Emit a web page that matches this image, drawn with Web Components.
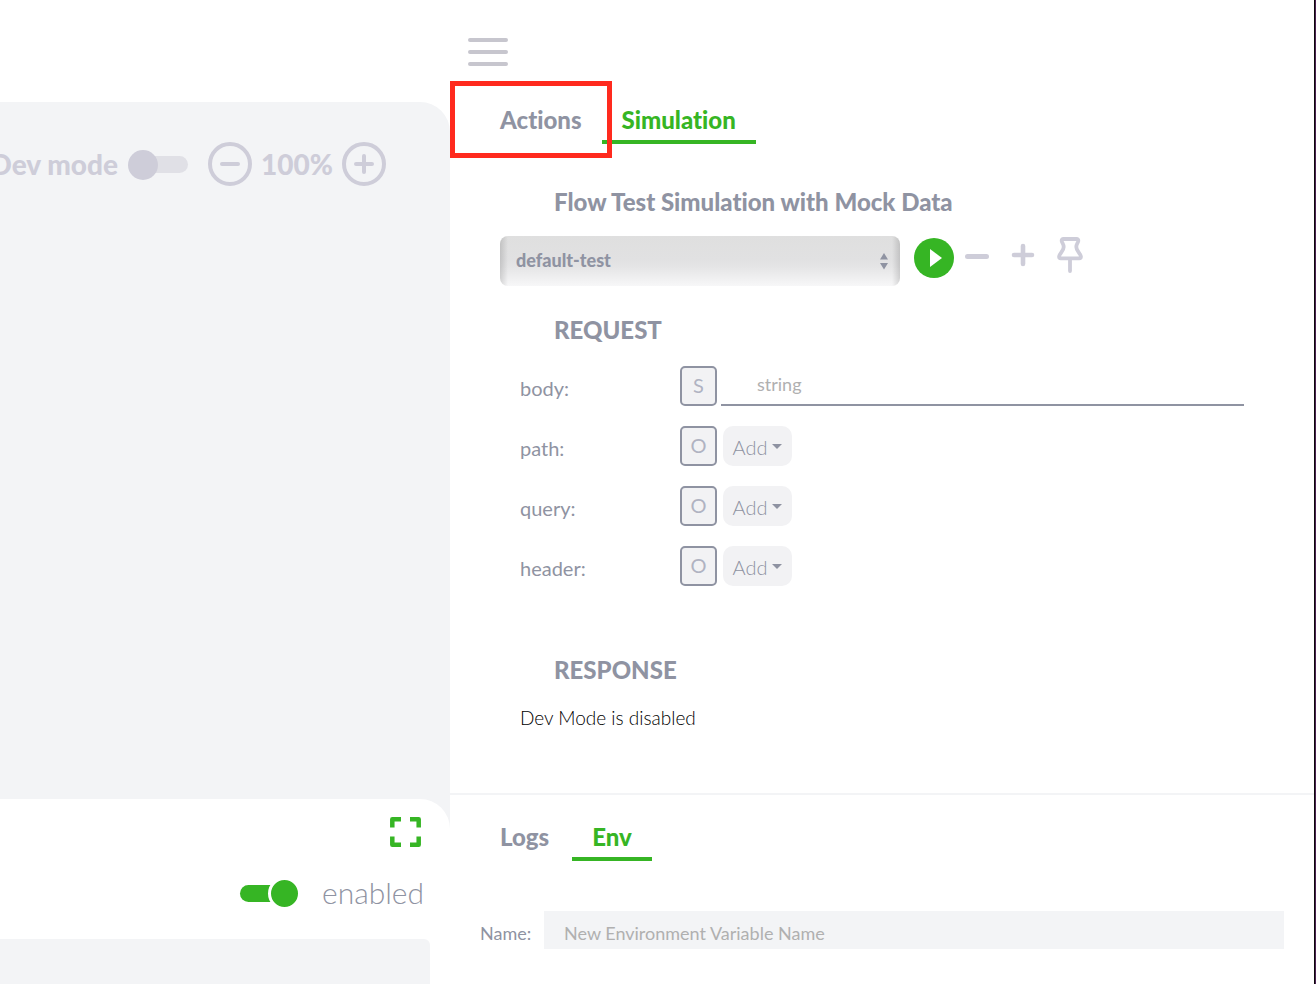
<!DOCTYPE html>
<html lang="en">
<head>
<meta charset="utf-8">
<title>Flow editor</title>
<style>
  html, body { margin: 0; }
  body {
    --ink: #8f93a2;
    --soft: #cecdd9;
    --green: #36b524;
    --wash: #f3f4f6;
    --field: #f2f2f4;
    background: #fff;
    color: var(--ink);
    font-family: Lato, "Open Sans", sans-serif;
    font-size: 20px;
    line-height: 24px;
    font-variant-ligatures: none;
  }
</style>
</head>
<body>
<flow-app></flow-app>
<script>
const base = `
  *, *::before, *::after { box-sizing: border-box; }
  button { border: 0; background: none; padding: 0; margin: 0; font: inherit; font-variant-ligatures: none; color: inherit; cursor: pointer; }
  svg { display: block; }
  h2, p { margin: 0; }
  h2 { font-size: 24px; line-height: 32px; font-weight: 900; }
`;
function define(name, css, html) {
  const template = document.createElement('template');
  customElements.define(name, class extends HTMLElement {
    constructor() {
      super();
      template.innerHTML = `<style>${base}${css}</style>${typeof html === 'function' ? html(this) : html}`;
      this.attachShadow({ mode: 'open' }).append(template.content.cloneNode(true));
    }
  });
}

define('toggle-switch', `
  :host { display: block; }
  input { appearance: none; display: block; position: relative; margin: 0; width: 60px; height: 30px; }
  input::before { content: ""; position: absolute; left: 6px; right: 0; top: 7px; height: 17px; border-radius: 9px; background: #e0e0e6; }
  input::after { content: ""; position: absolute; left: 0; top: 1px; width: 30px; height: 30px; border-radius: 50%; background: var(--soft); }
  input:checked::before { left: 0; right: 8px; background: var(--green); }
  input:checked::after { left: 28px; background: var(--green); border: 3px solid #fff; width: 33px; height: 33px; top: -1px; }
`, el => `<input type="checkbox" aria-label="${el.getAttribute('label')}" ${el.hasAttribute('checked') ? 'checked' : ''}>`);

define('zoom-button', `
  :host { display: block; }
  button { display: block; width: 44px; height: 44px; }
`, el => `<button aria-label="${el.getAttribute('kind') === 'in' ? 'Zoom in' : 'Zoom out'}">
  <svg width="44" height="44" viewBox="0 0 44 44" fill="none" stroke="#cecdd9" stroke-width="4" stroke-linecap="round">
    <circle cx="22" cy="22" r="20"/><path d="M14 22h16${el.getAttribute('kind') === 'in' ? 'M22 14v16' : ''}"/>
  </svg></button>`);

define('canvas-toolbar', `
  :host { display: flex; justify-content: flex-end; align-items: center; padding: 40px 64px 0 0; overflow: hidden; color: var(--soft); font-size: 28px; line-height: 44px; font-weight: 900; white-space: nowrap; }
  :host > * , span, output, toggle-switch, zoom-button { flex-shrink: 0; }
  toggle-switch { margin: 0 20px 0 10px; }
  output { width: 90px; text-align: center; }
`, `<span>Dev mode</span><toggle-switch label="Dev mode"></toggle-switch>
  <zoom-button kind="out"></zoom-button><output>100%</output><zoom-button kind="in"></zoom-button>`);

define('node-panel', `
  :host { display: block; background: #fff; border-radius: 0 30px 0 0; padding: 17px 20px 0 0; }
  .expand { display: block; margin: 0 8px 0 auto; width: 33px; height: 32px; }
  .state { display: flex; justify-content: flex-end; align-items: center; gap: 22px; padding-right: 6px; margin-top: 27px; height: 36px; font-size: 30px; line-height: 36px; font-weight: 300; }
  .state span { padding-bottom: 2px; }
  .body { margin-top: 28px; height: 45px; background: var(--wash); border-radius: 0 6px 0 0; }
`, `<button class="expand" aria-label="Expand">
    <svg width="33" height="32" viewBox="0 0 33 32" fill="none" stroke="#36b524" stroke-width="4.5" stroke-linejoin="round">
      <path d="M3.300 11.500V3.200h8.700M21 3.200h8.700v8.300M29.700 20.500v8.300H21M12 28.800H3.300v-8.300"/>
    </svg></button>
  <div class="state"><toggle-switch checked label="enabled"></toggle-switch><span>enabled</span></div>
  <div class="body"></div>`);

define('flow-canvas', `
  :host { display: grid; grid-template: 1fr auto / minmax(0, 1fr); margin-top: 102px; background: var(--wash); border-radius: 0 30px 0 0; min-width: 0; overflow: hidden; }
`, `<div><canvas-toolbar></canvas-toolbar></div><node-panel></node-panel>`);

define('tab-button', `
  :host { display: block; }
  button { display: block; padding: 0 20px; height: 44px; border-bottom: 4px solid transparent; font-size: 24px; line-height: 40px; font-weight: 900; }
  :host([selected]) button { color: var(--green); border-color: var(--green); }
`, el => `<button role="tab" aria-selected="${el.hasAttribute('selected')}"><slot></slot></button>`);

define('tab-bar', `
  :host { display: flex; padding-left: 30px; position: relative; }
`, `<slot></slot>`);

define('menu-button', `
  :host { display: block; padding: 37px 0 0 18px; }
  button { display: block; }
`, `<button aria-label="Menu"><svg width="40" height="30" viewBox="0 0 40 30" stroke="#c7c6ce" stroke-width="4" stroke-linecap="round"><path d="M2 3h36M2 15h36M2 27h36"/></svg></button>`);

define('test-picker', `
  :host { display: flex; align-items: flex-start; }
  .box { position: relative; flex: 0 1 400px; }
  select { appearance: none; display: block; width: 100%; height: 50px; margin: 0; border: 0; border-radius: 8px; padding: 0 32px 2px 16px; color: var(--ink); font: 900 18px/24px Lato, sans-serif; font-variant-ligatures: none;
    background: linear-gradient(90deg, #0002, #0000 8px calc(100% - 8px), #0002), linear-gradient(#dfdfdf, #e1e1e2 48%, #e4e4e5 60%, #f7f7f8); }
  .box svg { position: absolute; right: 12px; top: 17px; pointer-events: none; }
  .play { margin: 2px 0 0 14px; }
  .less { margin: 18px 0 0 11px; }
  .more { margin: 7px 0 0 22px; }
  .pin { margin: 0 0 0 21px; }
`, `<div class="box"><select aria-label="Test"><option>default-test</option></select>
    <svg width="8" height="17" viewBox="0 0 8 17" fill="#8f93a2"><path d="M4 0l4 6.500H0zM0 10h8l-4 6.500z"/></svg></div>
  <button class="play" aria-label="Run test"><svg width="40" height="40" viewBox="0 0 40 40"><circle cx="20" cy="20" r="20" fill="#36b524"/><path d="M16 11v18l12-9z" fill="#fff"/></svg></button>
  <button class="less" aria-label="Remove test"><svg width="24" height="5" viewBox="0 0 24 5"><rect width="24" height="5" rx="2.500" fill="#cecdd9"/></svg></button>
  <button class="more" aria-label="Add test"><svg width="24" height="24" viewBox="0 0 24 24" stroke="#cecdd9" stroke-width="4.600" stroke-linecap="round"><path d="M3 12h18M12 3v18"/></svg></button>
  <button class="pin" aria-label="Pin test"><svg width="28" height="38" viewBox="0 0 28 38" fill="none" stroke="#cecdd9" stroke-width="3.800" stroke-linecap="round" stroke-linejoin="round"><path d="M7.500 3h13q2 0 1.800 2c-.3 2-2 3-2 6 0 4 4 6 4.600 9.500q.1 1.900-1.700 1.900H4.800q-1.800 0-1.700-1.900C3.700 17 7.700 15 7.700 11c0-3-1.700-4-2-6q-.2-2 1.800-2zM14 23v12"/></svg></button>`);

define('request-field', `
  :host { display: grid; grid-template-columns: 160px 37px minmax(0, 1fr); height: 40px; }
  label, .name { padding-top: 10px; }
  .type { border: 2px solid var(--ink); border-radius: 5px; background: var(--field); color: #b0b3c2; text-align: center; line-height: 34px; }
  input { margin: 0 0 0 4px; min-width: 0; border: 0; border-bottom: 2px solid var(--ink); padding: 0 0 2px 36px; background: none; font: 400 18px/24px Lato, sans-serif; font-variant-ligatures: none; color: inherit; outline: 0; }
  input::placeholder { color: #b0b0b0; opacity: 1; }
  .add { justify-self: start; display: flex; align-items: center; justify-content: center; gap: 5px; margin-left: 6px; width: 69px; border-radius: 10px; background: var(--field); padding-top: 2px; font-weight: 300; }
  .add svg { margin-top: -2px; }
`, el => {
  const name = el.getAttribute('name');
  return el.getAttribute('type') === 'string'
    ? `<label for="value">${name}:</label><span class="type">S</span><input id="value" placeholder="string">`
    : `<span class="name" id="name">${name}:</span><span class="type">O</span><button class="add" aria-describedby="name"><span>Add</span><svg width="10" height="5" viewBox="0 0 10 5"><path d="M0 0h10L5 5z" fill="#8f93a2"/></svg></button>`;
});

define('simulation-view', `
  :host { display: block; padding: 42px 70px 60px 50px; }
  h2 { padding-left: 54px; }
  test-picker { margin: 18px 0 28px; }
  .fields { display: grid; gap: 20px; margin: 20px 0 68px 20px; }
  p { margin: 20px 0 0 20px; font-size: 19px; font-weight: 300; color: #000; }
`, `<h2>Flow Test Simulation with Mock Data</h2>
  <test-picker></test-picker>
  <h2>REQUEST</h2>
  <div class="fields">
    <request-field name="body" type="string"></request-field>
    <request-field name="path" type="object"></request-field>
    <request-field name="query" type="object"></request-field>
    <request-field name="header" type="object"></request-field>
  </div>
  <h2>RESPONSE</h2>
  <p>Dev Mode is disabled</p>`);

define('env-view', `
  :host { display: block; padding: 50px 30px 35px; }
  .row { display: grid; grid-template-columns: 64px minmax(0, 1fr); font-size: 18px; }
  label { padding-top: 10px; }
  input { margin: 0; min-width: 0; height: 38px; border: 0; background: var(--wash); padding: 6px 20px 0; font: 400 18px/24px Lato, sans-serif; font-variant-ligatures: none; color: inherit; }
  input::placeholder { color: #b0b0b0; opacity: 1; }
`, `<div class="row"><label for="name">Name:</label><input id="name" placeholder="New Environment Variable Name"></div>`);

define('side-panel', `
  :host { display: grid; grid-template-rows: 1fr auto; min-width: 0; border-right: 1px solid #0c080c; }
  .main-tabs { margin-top: 33px; }
  .highlight { position: absolute; left: 0; top: -19px; width: 162px; height: 77px; border: 5px solid #ff2a1e; pointer-events: none; }
  .env { border-top: 2px solid var(--wash); padding-top: 22px; }
  .env tab-bar { gap: 3px; }
`, `<section><menu-button></menu-button>
    <tab-bar class="main-tabs" role="tablist"><tab-button>Actions</tab-button><tab-button selected>Simulation</tab-button><div class="highlight"></div></tab-bar>
    <simulation-view></simulation-view></section>
  <section class="env"><tab-bar role="tablist"><tab-button>Logs</tab-button><tab-button selected>Env</tab-button></tab-bar>
    <env-view></env-view></section>`);

define('flow-app', `
  :host { display: grid; grid-template-columns: minmax(0, 450px) minmax(0, 1fr); min-height: 100vh; border-right: 1px solid #4b2050; box-sizing: border-box; }
`, `<flow-canvas></flow-canvas><side-panel></side-panel>`);
</script>
</body>
</html>
